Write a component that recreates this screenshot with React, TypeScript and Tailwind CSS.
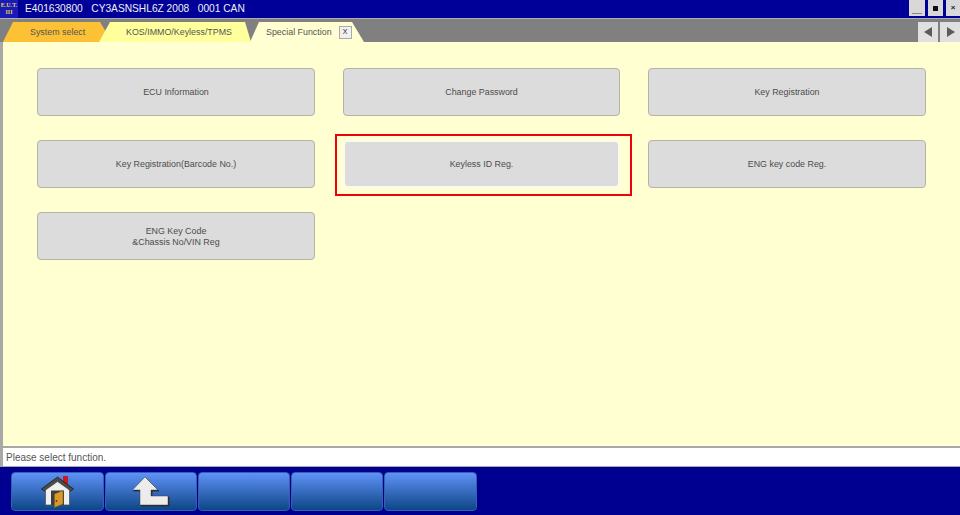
import React from "react";

const font = "font-['Liberation_Sans',Arial,sans-serif]";

const FunctionButton = ({ label, boxed, twoLine }: { label: React.ReactNode; boxed?: boolean; twoLine?: boolean }) => {
    if (boxed) {
        return (
            <div className="relative h-12 flex items-center justify-center">
                <div className="absolute -left-[8px] -right-[12px] -top-[6px] -bottom-[8px] border-2 border-[#f00008]" />
                <div className="w-[273px] h-[44px] flex items-center justify-center rounded-[3px] bg-[#dcdcdc] shadow-[0_0_3px_2px_#fbfbf0] text-[8.9px] leading-[11px] text-[#4c4c4c] text-center">
                    {label}
                </div>
            </div>
        );
    }
    return (
        <div className={`h-12 flex items-center justify-center rounded-[4px] border border-[#b4b4a6] bg-[#dcdcdc] text-[8.9px] leading-[11px] text-[#4c4c4c] text-center ${twoLine ? "pt-[1px]" : ""}`}>
            {label}
        </div>
    );
};

const HomeIcon = () => (
    <svg width="33" height="33" viewBox="0 0 33 33">
        <rect x="22" y="1" width="5" height="9" fill="#c81820" />
        <path d="M0.5 14 L16.5 2 L32.5 14 L29.5 16 L16.5 6.5 L3.5 16 Z" fill="#4a4a4a" stroke="#1c1c1c" strokeWidth="0.8" />
        <path d="M4.5 15 L16.5 6.5 L28.5 15 V30 H4.5 Z" fill="#f0f0f0" stroke="#555" strokeWidth="0.8" />
        <rect x="10" y="15.5" width="13" height="14.5" fill="#3e3e3e" />
        <path d="M13.5 19 L22 15.5 V29 L13.5 32.5 Z" fill="#d49a30" stroke="#8a6010" strokeWidth="0.7" />
        <circle cx="15.5" cy="26" r="0.9" fill="#5a3808" />
    </svg>
);

const BackIcon = () => (
    <svg width="38" height="31" viewBox="0 0 38 31">
        <path d="M1.5 15 L14 2 L27 15 H20 V21 H37 V30 H9 V15 Z" fill="#2a2a2a" stroke="#2a2a2a" strokeWidth="0.8" strokeLinejoin="round" />
        <path d="M0.5 14 L13 1 L26 14 H19 V20 H36 V29 H8 V14 Z" fill="#ececec" stroke="#444" strokeWidth="0.5" strokeLinejoin="round" />
    </svg>
);

const NavButton = ({ children, width }: { children?: React.ReactNode; width: string }) => (
    <div className={`${width} h-[39px] flex items-center justify-center rounded-[4px] border border-[#3a5fb0] bg-gradient-to-b from-[#5e93f8] to-[#0a4688]`}>
        {children}
    </div>
);

const ArrowButton = ({ dir }: { dir: "left" | "right" }) => (
    <div className="w-[20px] h-[20px] flex items-center justify-center bg-[#e0e0e0]">
        <svg width="9" height="10" viewBox="0 0 9 10">
            <path d={dir === "left" ? "M8 0 V10 L0 5 Z" : "M1 0 V10 L9 5 Z"} fill="#5c5c5c" />
        </svg>
    </div>
);

export default function App() {
    return (
        <div className={`${font} w-[960px] h-[515px] flex flex-col overflow-hidden bg-[#000090]`}>
            {/* title bar */}
            <div className="h-[18px] flex items-center bg-[#000099] shrink-0">
                <div className="w-[18px] h-[18px] flex flex-col items-center justify-center bg-[#1a1ab8] font-['Liberation_Serif',serif] font-bold text-[6px] leading-[7px] text-[#e8d24a]">
                    <span>E.U.T.</span>
                    <span>III</span>
                </div>
                <span className="ml-[7px] text-[10.2px] text-[#f0f0f0] whitespace-pre">E401630800{"   "}CY3ASNSHL6Z 2008{"   "}0001 CAN</span>
                <div className="ml-auto flex gap-[3px] self-start">
                    <div className="w-[16px] h-[16px] flex items-end justify-center pb-[2px] bg-[#d8d8d8]">
                        <div className="w-[10px] h-px bg-[#888]" />
                    </div>
                    <div className="w-[15px] h-[16px] flex items-center justify-center bg-[#d8d8d8]">
                        <div className="w-[5px] h-[5px] bg-[#111]" />
                    </div>
                    <div className="w-[14px] h-[16px] flex items-center justify-center bg-[#d8d8d8] text-[8px] leading-none font-bold text-[#223]">×</div>
                </div>
            </div>

            {/* tabs */}
            <div className="h-[24px] flex items-end bg-[#808080] border-t border-t-[#b0b0b0] pl-[3px] shrink-0">
                <div className="w-[109px] h-[20px] flex items-center pl-[27px] pt-[1px] bg-[#fdc136] text-[8.9px] text-[#555] [clip-path:polygon(0_100%,10px_0,97px_0,109px_100%)]">
                    System select
                </div>
                <div className="w-[152px] h-[20px] -ml-[13px] flex items-center pl-[27px] pt-[1px] bg-[#ffff9c] text-[8.9px] text-[#555] [clip-path:polygon(0_100%,11px_0,146px_0,152px_100%)]">
                    KOS/IMMO/Keyless/TPMS
                </div>
                <div className="w-[114px] h-[20px] -ml-[1px] flex items-center pl-[16px] pt-[1px] bg-[#ffffd2] text-[8.9px] text-[#555] [clip-path:polygon(0_100%,9px_0,102px_0,114px_100%)]">
                    Special Function
                    <span className="ml-[7px] w-[13px] h-[13px] flex items-center justify-center bg-[#f0f0f0] border border-[#aaa] text-[7px] text-[#222]">X</span>
                </div>
                <div className="ml-auto flex gap-[2px]">
                    <ArrowButton dir="left" />
                    <ArrowButton dir="right" />
                </div>
            </div>

            {/* content */}
            <div className="flex-1 bg-[#ffffd2] border-l-[3px] border-l-[#a8a8a8] pt-[26px] pl-[34px]">
                <div className="grid grid-cols-[278px_277px_278px] gap-x-[28px] gap-y-[24px]">
                    <FunctionButton label="ECU Information" />
                    <FunctionButton label="Change Password" />
                    <FunctionButton label="Key Registration" />
                    <FunctionButton label="Key Registration(Barcode No.)" />
                    <FunctionButton label="Keyless ID Reg." boxed />
                    <FunctionButton label="ENG key code Reg." />
                    <FunctionButton label={<>ENG Key Code<br />&amp;Chassis No/VIN Reg</>} twoLine />
                </div>
            </div>

            {/* status */}
            <div className="h-[21px] flex items-center pl-[3px] bg-white border-t-2 border-t-[#a8a8a8] border-b border-b-[#a8a8a8] border-l-[3px] border-l-[#a8a8a8] text-[10px] text-[#555] shrink-0">
                Please select function.
            </div>

            {/* bottom nav */}
            <div className="h-[48px] flex items-start pt-[5px] pl-[11px] gap-[1px] bg-[#000090] shrink-0">
                <NavButton width="w-[93px]"><HomeIcon /></NavButton>
                <NavButton width="w-[92px]"><BackIcon /></NavButton>
                <NavButton width="w-[92px]" />
                <NavButton width="w-[92px]" />
                <NavButton width="w-[93px]" />
            </div>
        </div>
    );
}
